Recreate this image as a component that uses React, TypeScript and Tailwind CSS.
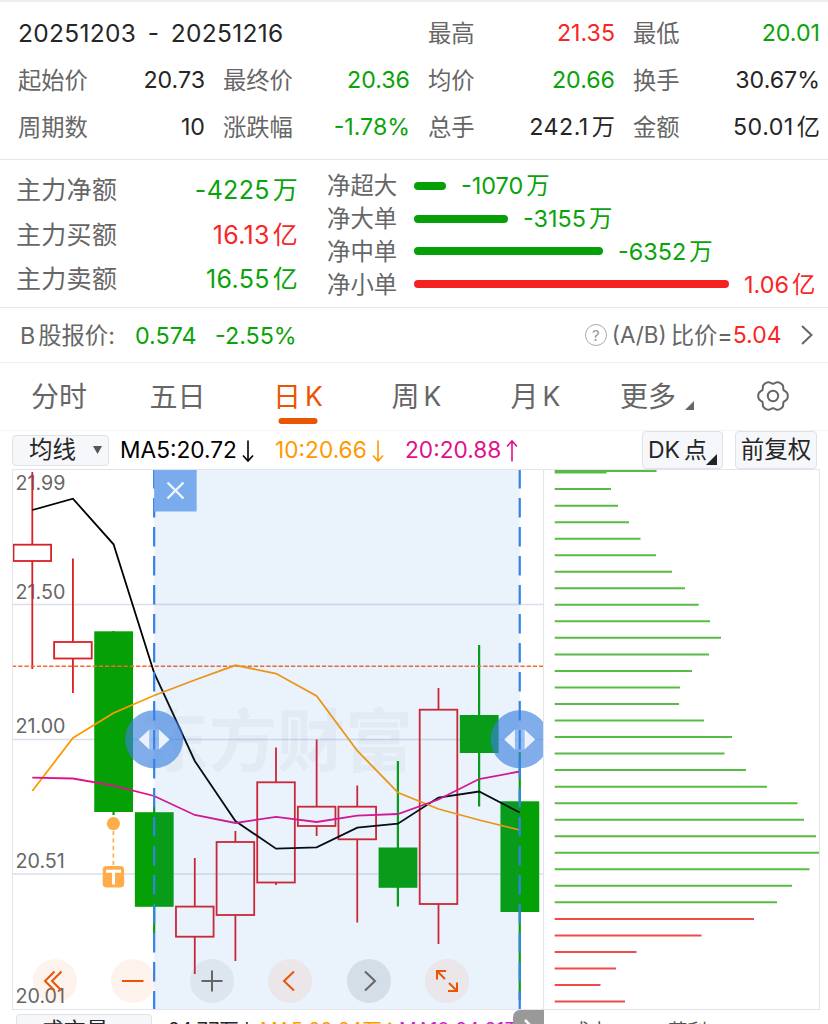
import type { ReactNode } from "react";
import clsx from "clsx";

type Tone = "up" | "down" | "plain";

const toneClass: Record<Tone, string> = {
  up: "text-[#f92626]",
  down: "text-[#0aa30a]",
  plain: "text-[#262626]",
};

const summary: { label: string; value: string; unit?: string; tone: Tone }[] = [
  { label: "最高", value: "21.35", tone: "up" },
  { label: "最低", value: "20.01", tone: "down" },
  { label: "起始价", value: "20.73", tone: "plain" },
  { label: "最终价", value: "20.36", tone: "down" },
  { label: "均价", value: "20.66", tone: "down" },
  { label: "换手", value: "30.67%", tone: "plain" },
  { label: "周期数", value: "10", tone: "plain" },
  { label: "涨跌幅", value: "-1.78%", tone: "down" },
  { label: "总手", value: "242.1", unit: "万", tone: "plain" },
  { label: "金额", value: "50.01", unit: "亿", tone: "plain" },
];

const mainFlow: { label: string; value: string; unit: string; tone: Tone }[] = [
  { label: "主力净额", value: "-4225", unit: "万", tone: "down" },
  { label: "主力买额", value: "16.13", unit: "亿", tone: "up" },
  { label: "主力卖额", value: "16.55", unit: "亿", tone: "down" },
];

const orderFlow: { label: string; value: string; unit: string; tone: Tone; width: number }[] = [
  { label: "净超大", value: "-1070", unit: "万", tone: "down", width: 32 },
  { label: "净大单", value: "-3155", unit: "万", tone: "down", width: 94 },
  { label: "净中单", value: "-6352", unit: "万", tone: "down", width: 189 },
  { label: "净小单", value: "1.06", unit: "亿", tone: "up", width: 315 },
];

// x of every trading day on the chart
const STEP = 40.62;
const dayX = (i: number) => 32.3 + i * STEP;

// top / bottom are the body, high / low the wick
const candles = [
  { up: true, high: 472, top: 544.7, bottom: 561, low: 669 },
  { up: true, high: 558.5, top: 642, bottom: 658.5, low: 693 },
  { up: false, high: 631, top: 631.3, bottom: 812, low: 815 },
  { up: false, high: 807, top: 812.2, bottom: 906.8, low: 933 },
  { up: true, high: 858, top: 906.6, bottom: 936.7, low: 974 },
  { up: true, high: 831, top: 842, bottom: 915, low: 961 },
  { up: true, high: 747.5, top: 782.3, bottom: 882.5, low: 885 },
  { up: true, high: 739.5, top: 806.7, bottom: 826, low: 836 },
  { up: true, high: 785.5, top: 806.7, bottom: 839.3, low: 922.5 },
  { up: false, high: 761, top: 847.5, bottom: 887.8, low: 906.5 },
  { up: true, high: 688, top: 709.7, bottom: 904, low: 944 },
  { up: false, high: 645, top: 715, bottom: 753, low: 806.5 },
  { up: false, high: 752, top: 801.3, bottom: 912, low: 1000 },
];

const averages = [
  {
    color: "#000000",
    ys: [510, 498.7, 544.3, 673, 761, 821, 848.7, 847.3, 827.7, 823.7, 797.5, 791.5, 812.5],
  },
  {
    color: "#ff9900",
    ys: [791, 738, 713, 695.5, 680, 665.3, 673.5, 696, 750.7, 792.5, 809, 820, 830],
  },
  {
    color: "#e0108c",
    ys: [777.7, 778.5, 785.7, 796, 815, 823, 816.8, 822, 815.7, 814, 799.5, 779, 771.5],
  },
];

const priceAxis = [
  { label: "21.99", y: 490 },
  { label: "21.50", y: 598.5 },
  { label: "21.00", y: 733 },
  { label: "20.51", y: 868 },
  { label: "20.01", y: 1003 },
];

// right end of every price bucket, from the top price down
const buckets = [
  611, 618, 629, 640.5, 656, 672, 685, 698.7, 710, 721, 709, 692, 680, 679, 704, 732, 724.5, 746,
  767, 797.5, 804, 816, 820, 809.5, 792, 777, 754, 701.5, 636.5, 616, 600.5, 625,
];
const FIRST_RED = 26;

// six-lobed outline of the settings icon
const gearPoints = Array.from({ length: 72 }, (_, i) => {
  const a = (i * Math.PI) / 36;
  const r = 13.8 + 1.3 * Math.cos(6 * a) - 0.35 * Math.cos(12 * a);
  return `${(16 + r * Math.cos(a)).toFixed(2)},${(16 + r * Math.sin(a)).toFixed(2)}`;
}).join(" ");

function Field({ label, value, unit, tone }: { label: string; value: string; unit?: string; tone: Tone }) {
  return (
    <div className="flex items-center justify-between">
      <span className="pt-[2px] text-[23.3px] text-[#666]">{label}</span>
      <span className={clsx("flex items-center gap-[3px] pt-px text-[23.2px]", toneClass[tone])}>
        <span className={clsx(unit && "tracking-[0.5px]")}>{value}</span>
        {unit && <span>{unit}</span>}
      </span>
    </div>
  );
}

function Amount({ value, unit, tone }: { value: string; unit: string; tone: Tone }) {
  return (
    <span className={clsx("flex items-center gap-[3px]", toneClass[tone])}>
      <span>{value}</span>
      <span>{unit}</span>
    </span>
  );
}

function Summary() {
  return (
    <section className="grid h-[160px] grid-cols-[187px_187px_187px_187px] grid-rows-[47px_47px_47px] gap-x-[18px] border-b border-[#e6e6e6] pt-[9.5px] pl-[18px]">
      <div className="col-span-2 flex items-center gap-[11.5px] text-[24.5px] tracking-[0.3px] text-[#262626]">
        <span>20251203</span>
        <span>-</span>
        <span>20251216</span>
      </div>
      {summary.map((item) => (
        <Field key={item.label} {...item} />
      ))}
    </section>
  );
}

function MoneyFlow() {
  return (
    <section className="flex h-[148px] border-b border-[#e8e8e8] pl-4">
      <div className="flex w-[282px] flex-col pt-[8.5px] text-[25px]">
        {mainFlow.map((row) => (
          <div key={row.label} className="flex h-[44.5px] items-center justify-between">
            <span className="tracking-[0.3px] text-[#666]">{row.label}</span>
            <span className="tracking-[0.3px]">
              <Amount {...row} />
            </span>
          </div>
        ))}
      </div>
      <div className="ml-[29px] flex flex-col pt-[9.5px] text-[23.4px]">
        {orderFlow.map((row) => (
          <div key={row.label} className="flex h-[32.8px] items-center">
            <span className="w-[87px] text-[#666]">{row.label}</span>
            <span
              className={clsx(
                "mr-[15px] h-2 rounded-full",
                row.tone === "up" ? "bg-[#f52222]" : "bg-[#05a005]"
              )}
              style={{ width: row.width }}
            />
            <Amount {...row} />
          </div>
        ))}
      </div>
    </section>
  );
}

function BShareBar() {
  return (
    <section className="flex h-[55px] items-center border-b border-[#f0f0f0] pt-px pl-5 text-[23.3px] text-[#666]">
      <div className="flex w-[115px] items-center gap-[3px]">
        <span>B</span>
        <span>股报价:</span>
      </div>
      <span className="w-[80px] text-[#0aa30a]">0.574</span>
      <span className="text-[#0aa30a]">-2.55%</span>
      <div className="ml-auto flex items-center pr-[14.5px]">
        <span className="mr-[5px] flex h-[22px] w-[22px] items-center justify-center rounded-full border-[1.5px] border-[#aaa] text-[15px] text-[#999]">
          ?
        </span>
        <span className="text-[22.4px]">(A/B)</span>
        <span className="ml-1">比价=</span>
        <span className="text-[23px] text-[#f92626]">5.04</span>
        <svg viewBox="0 0 14 22" className="ml-[18px] h-[22px] w-[14px]" fill="none" stroke="#666" strokeWidth="2">
          <path d="M2 2l9.5 9L2 20" />
        </svg>
      </div>
    </section>
  );
}

function Tab({ className, active, children }: { className: string; active?: boolean; children: ReactNode }) {
  return (
    <button
      className={clsx(
        "relative flex items-center justify-center gap-1",
        active ? "text-[#ea5504]" : "text-[#666]",
        className
      )}
    >
      {children}
      {active && (
        <span className="absolute bottom-[6px] left-1/2 h-[6px] w-[39px] -translate-x-1/2 rounded-full bg-[#ea5504]" />
      )}
    </button>
  );
}

function Gear() {
  return (
    <svg viewBox="0 0 32 32" className="-mt-[2px] ml-[62.5px] h-8 w-8" fill="none" stroke="#666" strokeWidth="2" strokeLinejoin="round">
      <polygon points={gearPoints} />
      <circle cx="16" cy="16" r="5.2" />
    </svg>
  );
}

function PeriodTabs() {
  return (
    <nav className="flex h-[68px] items-stretch border-b border-[#f4f4f4] text-[28px]">
      <Tab className="w-[118px]">分时</Tab>
      <Tab className="w-[119px]">五日</Tab>
      <Tab className="w-[122px]" active>
        <span>日</span>
        <span className="text-[26.5px]">K</span>
      </Tab>
      <Tab className="w-[115px]">
        <span>周</span>
        <span className="text-[26.5px]">K</span>
      </Tab>
      <Tab className="w-[123px]">
        <span>月</span>
        <span className="text-[26.5px]">K</span>
      </Tab>
      <div className="flex items-center pl-[23px] text-[#666]">
        <span>更多</span>
        <svg viewBox="0 0 9 9" className="mt-[17px] ml-[9px] h-[9px] w-[9px]">
          <path d="M9 0V9H0z" fill="#666" />
        </svg>
        <Gear />
      </div>
    </nav>
  );
}

function Arrow({ up }: { up?: boolean }) {
  return (
    <svg
      viewBox="0 0 12 24"
      className={clsx("ml-[5px] h-6 w-3", up && "rotate-180")}
      fill="none"
      stroke="currentColor"
      strokeWidth="1.6"
    >
      <path d="M6 1.5V22M1 16.5l5 5.5 5-5.5" />
    </svg>
  );
}

function IndicatorBar() {
  return (
    <div className="flex h-[38px] items-center pl-3 text-[23.5px]">
      <div className="flex h-[31px] w-[97px] items-center rounded-[4px] border border-[#e0e2e8] bg-[#f6f7fa] pl-4 text-[#262626]">
        <span className="w-[64px]">均线</span>
        <svg viewBox="0 0 9 8" className="h-2 w-[9px]">
          <path d="M0 0h9L4.5 8z" fill="#555" />
        </svg>
      </div>
      <div className="flex items-center pt-px pl-[11px] text-[22.7px]">
        <div className="flex w-[155px] items-center text-black">
          MA5:20.72
          <Arrow />
        </div>
        <div className="flex w-[130px] items-center text-[#ff9900]">
          10:20.66
          <Arrow />
        </div>
        <div className="flex items-center text-[#e0108c]">
          20:20.88
          <Arrow up />
        </div>
      </div>
      <div className="ml-auto flex gap-3 pr-[11px] text-[#262626]">
        <div className="flex h-[38px] w-[81px] items-center gap-1 rounded-[4px] border border-[#e0e2e8] bg-[#f6f7fa] pl-[5px]">
          <span className="text-[23px]">DK</span>
          <span className="text-[23px]">点</span>
          <svg viewBox="0 0 11 11" className="mt-[18px] -ml-[5px] h-[11px] w-[11px] shrink-0">
            <path d="M11 0V11H0z" fill="#222" />
          </svg>
        </div>
        <div className="flex h-[38px] w-[82px] items-center justify-center rounded-[4px] border border-[#e0e2e8] bg-[#f6f7fa] whitespace-nowrap">
          前复权
        </div>
      </div>
    </div>
  );
}

function DragHandle({ x }: { x: number }) {
  return (
    <g>
      <circle cx={x} cy={739.3} r="29" fill="#3a80e0" fillOpacity="0.64" />
      <rect x={x - 4.5} y={729.5} width="9" height="20" fill="#eaf2fc" fillOpacity="0.25" />
      <path
        d={`M${x - 4.8} 729.5v20L${x - 15.5} 739.5zM${x + 4.8} 729.5v20L${x + 15.5} 739.5z`}
        fill="#eaf2fc"
      />
    </g>
  );
}

function KLineChart() {
  const left = dayX(3);
  const right = dayX(12);

  return (
    <svg viewBox="12 469 532 541" className="block h-[541px] w-[532px]" fill="none">
      {[604.5, 739.5, 874].map((y) => (
        <path key={y} d={`M12 ${y}H543.5`} stroke="#d9e0ec" strokeWidth="1.3" />
      ))}
      <text x="141" y="766" fontSize="68" fontWeight="700" fill="#888f99" fillOpacity="0.08">
        东方财富
      </text>

      {priceAxis.map(({ label, y }) => (
        <text key={label} x="15.5" y={y} fontSize="19.7" fill="#666">
          {label}
        </text>
      ))}

      {candles.map(({ up, high, top, bottom, low }, i) => {
        const x = dayX(i);
        return up ? (
          <g key={i} stroke="#db1f26" strokeWidth="1.8">
            <path d={`M${x} ${high}V${top}M${x} ${bottom}V${low}`} />
            <rect x={x - 18.8} y={top} width="37.6" height={bottom - top} />
          </g>
        ) : (
          <g key={i}>
            <path d={`M${x} ${high}V${low}`} stroke="#05a005" strokeWidth="2.2" />
            <rect x={x - 19.3} y={top} width="38.8" height={bottom - top} fill="#05a005" />
          </g>
        );
      })}

      <path d="M12 666.3H543.5" stroke="#f5692c" strokeWidth="1.6" strokeDasharray="4.3 1.9" />

      {averages.map(({ color, ys }) => (
        <polyline
          key={color}
          points={ys.map((y, i) => `${dayX(i)},${y}`).join(" ")}
          stroke={color}
          strokeWidth="1.8"
        />
      ))}

      {/* T mark under the third day */}
      <circle cx="113.4" cy="823.6" r="6.6" fill="#ffac4b" />
      <path d="M113.4 831V866" stroke="#ffac4b" strokeWidth="1.7" strokeDasharray="4 3.5" />
      <rect x="102.7" y="866" width="21.5" height="21.5" rx="4" fill="#ffac4b" />
      <path d="M106 871.2H121M113.5 871.2V884.5" stroke="#fff" strokeWidth="3" />

      {/* selected range */}
      <rect x={left} y="469" width={right - left} height="541" fill="#2f7fe0" fillOpacity="0.1" />
      <DragHandle x={left} />
      <DragHandle x={right} />
      <path
        d={`M${left} 469V1010M${right} 469V1010`}
        stroke="#3583e6"
        strokeWidth="2.2"
        strokeDasharray="19.5 9.5"
      />
      <rect x={left} y="469" width="42.5" height="42.5" fill="#7aaced" />
      <path d="M167.5 482.5l16 16M183.5 482.5l-16 16" stroke="#f0f6fd" strokeWidth="2.4" />

      <path d="M12.5 1009.5V469.5H543.5V1009.5z" stroke="#e2e4ea" />
    </svg>
  );
}

function RoundButton({ muted, dark, children }: { muted?: boolean; dark?: boolean; children: ReactNode }) {
  return (
    <button
      className={clsx(
        "flex h-11 w-11 items-center justify-center rounded-full",
        muted ? "text-[#666]" : "text-[#ea5504]",
        muted ? (dark ? "bg-[#5a6b80]/15" : "bg-[#6b7280]/10") : "bg-[#f05a14]/8"
      )}
    >
      <svg viewBox="0 0 24 24" className="h-6 w-6" fill="none" stroke="currentColor" strokeWidth="2">
        {children}
      </svg>
    </button>
  );
}

function ChartControls() {
  return (
    <div className="absolute bottom-[7px] left-[33px] flex gap-[34.4px]">
      <RoundButton>
        <path d="M11.5 2.5L2 12l9.5 9.5M18.5 2.5L9 12l9.5 9.5" />
      </RoundButton>
      <RoundButton>
        <path d="M1 12H22.5" />
      </RoundButton>
      <RoundButton muted>
        <path d="M1.5 12H22.5M12 1.5V22.5" />
      </RoundButton>
      <RoundButton>
        <path d="M16 2.5L6 12l10 9.5" />
      </RoundButton>
      <RoundButton muted dark>
        <path d="M8 2.5L18 12 8 21.5" />
      </RoundButton>
      <RoundButton>
        <path d="M2 10.5V2h9M2.5 2.5l7.5 7.5M22 13.5v8.5h-9M21.5 21.5L14 14" />
      </RoundButton>
    </div>
  );
}

function PriceProfile() {
  return (
    <svg viewBox="544 469 284 541" className="block h-[541px] w-[284px]" fill="none">
      <g stroke="#58bb43" strokeWidth="2">
        <path d="M554.7 471H656.5M554.7 472.5H606.5" />
        {buckets.map((end, i) => (
          <path
            key={i}
            d={`M554.7 ${489.1 + i * 16.53}H${end}`}
            stroke={i < FIRST_RED ? "#58bb43" : "#ee4b4b"}
          />
        ))}
      </g>
      <path d="M544 469.5H819.5V1009.5H544" stroke="#e2e4ea" />
    </svg>
  );
}

function VolumeBar() {
  return (
    <div className="flex h-[14px] items-start overflow-hidden pl-4 text-[19.5px] leading-[30px] whitespace-nowrap">
      <div className="mt-1 h-[34px] w-[136px] shrink-0 rounded-[4px] border border-[#e0e2e8] bg-[#f6f7fa] pl-[24px] text-[22.5px] leading-[32px] text-[#262626]">
        成交量
      </div>
      <span className="mt-[5px] ml-[16px] w-[92px] shrink-0 text-[#262626]">24.77万↓</span>
      <span className="mt-[5px] w-[139px] shrink-0 text-[#ff9900]">MA5:22.24万↑</span>
      <span className="mt-[5px] w-[114px] shrink-0 overflow-hidden text-[#c81ec8]">MA10:24.21万</span>
      <div className="flex h-[30px] w-[31px] shrink-0 justify-center rounded-tl-[7px] bg-[#999] pt-[9px]">
        <svg viewBox="0 0 12 18" className="h-[18px] w-3" fill="none" stroke="#fff" strokeWidth="2.5">
          <path d="M2 1l8 8-8 8" />
        </svg>
      </div>
      <span className="mt-[6px] ml-[26px] w-[98px] shrink-0 text-[#555]">成本</span>
      <span className="mt-[6px] text-[#555]">获利</span>
    </div>
  );
}

export default function App() {
  return (
    <main className="flex h-[1024px] w-[828px] flex-col overflow-hidden bg-white font-['Inter','Noto_Sans_CJK_SC',sans-serif] leading-none">
      <div className="-mb-[2px] h-[2px] shrink-0 bg-[#eee]" />
      <Summary />
      <MoneyFlow />
      <BShareBar />
      <PeriodTabs />
      <IndicatorBar />
      <div className="relative flex pl-3">
        <KLineChart />
        <PriceProfile />
        <ChartControls />
      </div>
      <VolumeBar />
    </main>
  );
}
